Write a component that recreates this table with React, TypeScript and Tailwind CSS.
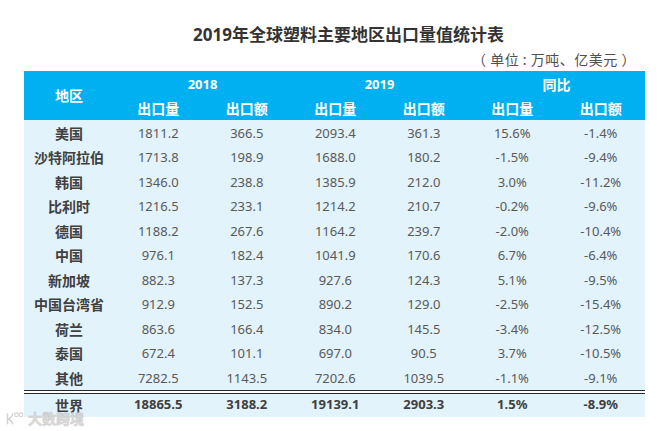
const rows: [string, string, string, string, string, string, string][] = [
  ["美国", "1811.2", "366.5", "2093.4", "361.3", "15.6%", "-1.4%"],
  ["沙特阿拉伯", "1713.8", "198.9", "1688.0", "180.2", "-1.5%", "-9.4%"],
  ["韩国", "1346.0", "238.8", "1385.9", "212.0", "3.0%", "-11.2%"],
  ["比利时", "1216.5", "233.1", "1214.2", "210.7", "-0.2%", "-9.6%"],
  ["德国", "1188.2", "267.6", "1164.2", "239.7", "-2.0%", "-10.4%"],
  ["中国", "976.1", "182.4", "1041.9", "170.6", "6.7%", "-6.4%"],
  ["新加坡", "882.3", "137.3", "927.6", "124.3", "5.1%", "-9.5%"],
  ["中国台湾省", "912.9", "152.5", "890.2", "129.0", "-2.5%", "-15.4%"],
  ["荷兰", "863.6", "166.4", "834.0", "145.5", "-3.4%", "-12.5%"],
  ["泰国", "672.4", "101.1", "697.0", "90.5", "3.7%", "-10.5%"],
  ["其他", "7282.5", "1143.5", "7202.6", "1039.5", "-1.1%", "-9.1%"],
];

const total = ["世界", "18865.5", "3188.2", "19139.1", "2903.3", "1.5%", "-8.9%"];

const font = {
  fontFamily: '"Noto Sans", "Noto Sans CJK SC", sans-serif',
};

function DataRow({ cells, bold }: { cells: string[]; bold?: boolean }) {
  return (
    <div
      className={`grid grid-cols-[90px_repeat(6,1fr)] items-center ${
        bold ? "h-[23px]" : "h-[24.5px] pt-[2px]"
      }`}
    >
      <div className="text-center text-[14px] font-bold text-[#404040]">
        {cells[0]}
      </div>
      {cells.slice(1).map((c, i) => (
        <div
          className={`text-center text-[13px] ${
            bold ? "font-bold text-[#404040]" : "text-[#595959]"
          }`}
          key={i}
        >
          {c}
        </div>
      ))}
    </div>
  );
}

export default function App() {
  return (
    <div className="relative h-[431px] w-[669px] bg-white" style={font}>
      <div className="ml-[24px] w-[621px] pt-[22px]">
        <h1 className="pl-[28px] text-center text-[17px] font-bold leading-[26px] text-[#333333]">
          2019年全球塑料主要地区出口量值统计表
        </h1>
        <p
          className="mt-[1px] pr-[9px] text-right text-[14px] leading-[20px] tracking-[0.5px] text-[#505050]"
          style={{ fontFamily: '"Noto Sans CJK SC", sans-serif' }}
        >
          （ 单位 : 万吨、亿美元 ）
        </p>

        <div className="mt-[2px] bg-[#e3f3fc]">
          <div className="grid h-[49px] grid-cols-[90px_repeat(6,1fr)] grid-rows-[26px_23px] bg-[#00b0f0] text-[14px] font-bold text-white">
            <div className="row-span-2 flex items-center justify-center">
              地区
            </div>
            <div className="col-span-2 flex items-center justify-center pt-[1px] text-[13px]">
              2018
            </div>
            <div className="col-span-2 flex items-center justify-center pt-[1px] text-[13px]">
              2019
            </div>
            <div className="col-span-2 flex items-center justify-center pt-[1px]">
              同比
            </div>
            {["出口量", "出口额", "出口量", "出口额", "出口量", "出口额"].map(
              (t, i) => (
                <div className="flex items-center justify-center" key={i}>
                  {t}
                </div>
              ),
            )}
          </div>

          {rows.map((r) => (
            <DataRow cells={r} key={r[0]} />
          ))}

          <div className="h-[4px] border-y border-[#2a2a2a] bg-white" />

          <DataRow bold cells={total} />
        </div>
      </div>

      <div className="absolute left-[5px] top-[411px] flex items-center gap-[3px] opacity-80">
        <svg fill="none" height="15" viewBox="0 0 26 20" width="20">
          <path
            d="M3 4v13M3 11c4-1 6-4 7-7M4 11c3 1 5 3 6 6"
            stroke="#c9c9c9"
            strokeLinecap="round"
            strokeWidth="2"
          />
          <circle cx="15" cy="5" r="2.5" stroke="#c9c9c9" strokeWidth="1.5" />
          <circle cx="21" cy="5" r="2.5" stroke="#c9c9c9" strokeWidth="1.5" />
        </svg>
        <span
          className="text-[14px] font-bold leading-[15px] text-[#d4d4d4]"
          style={{ WebkitTextStroke: "0.5px #c0c0c0" }}
        >
          大数跨境
        </span>
      </div>
    </div>
  );
}
